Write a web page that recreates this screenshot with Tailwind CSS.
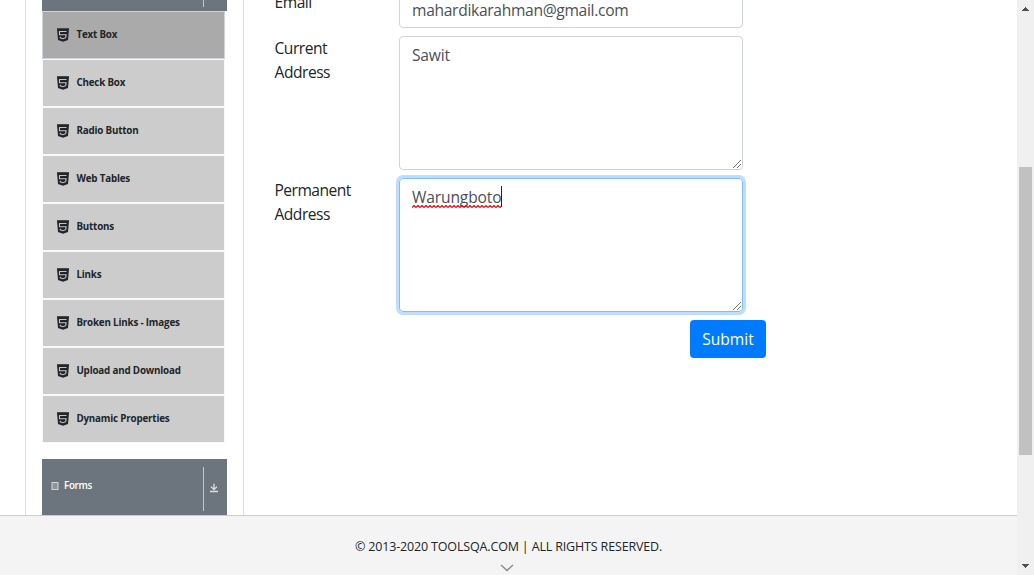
<!DOCTYPE html>
<html lang="en">
<head>
<meta charset="utf-8">
<title>ToolsQA</title>
<script src="https://cdn.jsdelivr.net/npm/@tailwindcss/browser@4"></script>
</head>
<body class="flex h-[575px] w-[1034px] overflow-hidden bg-white font-['Open_Sans','Noto_Sans',sans-serif] text-[#212529]">
<svg class="hidden">
  <symbol id="html5" viewBox="0 0 12 14"><path fill="#55595c" d="M0 0h12v2H0z"/><path fill="#212529" d="M0 .8h12l-1 11.2L6 13.8 1 12z"/><path fill="none" stroke="#c4c4c4" stroke-width="1.1" d="M9.5 3.5h-7v3.2h6.6l-.4 3L6 10.7 3.3 9.8V8.8"/></symbol>
  <symbol id="grip" viewBox="0 0 10 10"><path fill="none" stroke="#666" stroke-width=".9" d="M1 9l8-8M5 9l4-4"/></symbol>
</svg>
<div class="flex w-[1017px] flex-col">
  <main class="flex h-[515px] overflow-hidden pl-[25px]">
    <aside class="w-[219px] shrink-0 border-x border-[#dcdcdc] pl-4">
      <div class="flex h-[11px] w-[185px] bg-[#6c757d] pl-[161px]"><div class="h-[7px] w-px bg-[#c4c8cb]"></div></div>
      <ul id="menu" class="w-[183px] text-[9.8px] leading-[14px] font-bold tracking-[-0.18px]">
        <li class="flex h-12 items-center border border-[#ced4da] bg-[#aaa] pl-[14px]"><svg class="h-[14px] w-3"><use href="#html5"/></svg><span class="ml-[7.4px]">Text Box</span></li>
        <li class="flex h-12 items-center border border-[#f8f9fa] bg-[#ccc] pl-[14px]"><svg class="h-[14px] w-3"><use href="#html5"/></svg><span class="ml-[7.4px]">Check Box</span></li>
        <li class="flex h-12 items-center border border-[#f8f9fa] bg-[#ccc] pl-[14px]"><svg class="h-[14px] w-3"><use href="#html5"/></svg><span class="ml-[7.4px]">Radio Button</span></li>
        <li class="flex h-12 items-center border border-[#f8f9fa] bg-[#ccc] pl-[14px]"><svg class="h-[14px] w-3"><use href="#html5"/></svg><span class="ml-[7.4px]">Web Tables</span></li>
        <li class="flex h-12 items-center border border-[#f8f9fa] bg-[#ccc] pl-[14px]"><svg class="h-[14px] w-3"><use href="#html5"/></svg><span class="ml-[7.4px]">Buttons</span></li>
        <li class="flex h-12 items-center border border-[#f8f9fa] bg-[#ccc] pl-[14px]"><svg class="h-[14px] w-3"><use href="#html5"/></svg><span class="ml-[7.4px]">Links</span></li>
        <li class="flex h-12 items-center border border-[#f8f9fa] bg-[#ccc] pl-[14px]"><svg class="h-[14px] w-3"><use href="#html5"/></svg><span class="ml-[7.4px]">Broken Links - Images</span></li>
        <li class="flex h-12 items-center border border-[#f8f9fa] bg-[#ccc] pl-[14px]"><svg class="h-[14px] w-3"><use href="#html5"/></svg><span class="ml-[7.4px]">Upload and Download</span></li>
        <li class="flex h-12 items-center border border-[#f8f9fa] bg-[#ccc] pl-[14px]"><svg class="h-[14px] w-3"><use href="#html5"/></svg><span class="ml-[7.4px]">Dynamic Properties</span></li>
      </ul>
      <div class="mt-4 flex h-14 w-[185px] bg-[#6c757d] text-white">
        <div class="flex w-[161px] items-start pt-[19px] pl-[9px]">
          <svg class="mt-[4px] h-2 w-2" viewBox="0 0 8 8"><rect x="1" y=".5" width="6" height="7" fill="#8d949a" stroke="#d3d6d8"/><path d="M.5 1v6M7.5 1v6" stroke="#a4a9ae" stroke-width=".6"/></svg>
          <span class="ml-[5px] text-[9.8px] leading-[15px] font-semibold tracking-[-0.3px]">Forms</span>
        </div>
        <div class="mt-2 h-11 w-px bg-[#c4c8cb]"></div>
        <svg class="mt-[24px] ml-[6px] h-[10px] w-[9px]" viewBox="0 0 9 10"><path fill="none" stroke="#dcdfe1" stroke-width="1.3" d="M4 .8v5.7M1 3.6l3 2.9 3-2.9M0 8.5h8"/></svg>
      </div>
    </aside>
    <section class="-mt-[10px] flex w-[522px] flex-col gap-2 pl-[30.5px] text-[15.6px] leading-6">
      <div class="flex">
        <div class="w-[124.5px] shrink-0 tracking-[-0.48px]">Email</div>
        <div class="h-[38px] w-[344px] shrink-0 rounded border border-[#ced4da] px-3 py-[7px] text-[#495057]"><span id="mail" class="tracking-[-0.31px]">mahardikarahman@gmail.com</span></div>
      </div>
      <div class="flex">
        <div class="w-[124.5px] shrink-0 tracking-[-0.48px]">Current<br>Address</div>
        <div class="relative h-[134px] w-[344px] shrink-0 rounded border border-[#ced4da] px-3 py-1.5 text-[#495057]"><span class="tracking-[-0.2px]">Sawit</span><svg class="absolute right-0 bottom-0 size-[10px]"><use href="#grip"/></svg></div>
      </div>
      <div class="flex">
        <div class="w-[124.5px] shrink-0 tracking-[-0.52px]">Permanent<br>Address</div>
        <div class="relative flex h-[134px] w-[344px] shrink-0 items-start rounded border border-[#80bdff] px-3 py-1.5 text-[#495057] shadow-[0_0_0_3px_#bfdeff]">
          <span class="w-[89px] tracking-[-0.15px]">Warungboto</span><span class="mt-px h-[21px] w-px bg-[#212529]"></span>
          <svg class="absolute top-[26px] left-3 h-[3px] w-[89px]"><defs><pattern id="wave" width="4" height="3" patternUnits="userSpaceOnUse"><path d="M0 2.5L2 .5l2 2" fill="none" stroke="#f00000" stroke-width="1.2"/></pattern></defs><rect width="89" height="3" fill="url(#wave)"/></svg>
          <svg class="absolute right-0 bottom-0 size-[10px]"><use href="#grip"/></svg>
        </div>
      </div>
      <button class="h-[38px] w-[76px] shrink-0 self-end rounded bg-[#007bff] text-white">Submit</button>
    </section>
  </main>
  <footer class="flex h-[60px] flex-col items-center border-t border-[#ccc] bg-[#f4f4f4]">
    <span class="mt-[21px] text-[12.5px] leading-5 tracking-[-0.16px] whitespace-nowrap">© 2013-2020 TOOLSQA.COM | ALL RIGHTS RESERVED.</span>
    <svg class="mt-[7px] mr-[3px] h-[8px] w-[14px]" viewBox="0 0 14 8"><path d="M1 1l6 5.5L13 1" fill="none" stroke="#888" stroke-width="1.3"/></svg>
  </footer>
</div>
<div class="flex w-[17px] flex-col items-center bg-[#f0f0f0]">
  <svg class="mt-[7px] h-1 w-[7px]" viewBox="0 0 7 4" shape-rendering="crispEdges"><path d="M3.5 0L7 3.5V4H0v-.5z" fill="#505050"/></svg>
  <div class="mt-[156px] mr-[1px] h-[288px] w-[13px] bg-[#c1c1c1]"></div>
  <svg class="mt-[109px] h-1 w-[7px]" viewBox="0 0 7 4" shape-rendering="crispEdges"><path d="M0 0h7v.5L3.5 4 0 .5z" fill="#505050"/></svg>
</div>
</body>
</html>
